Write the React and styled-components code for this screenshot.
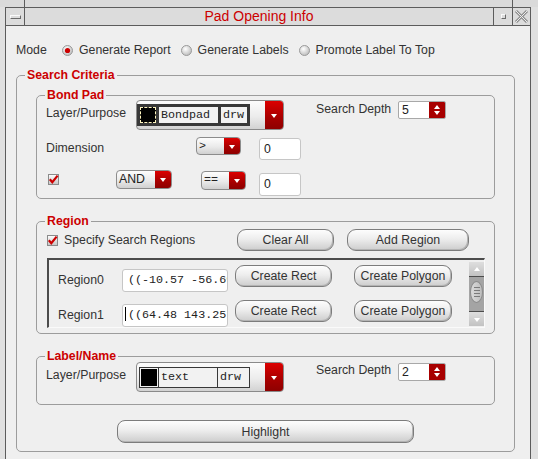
import React from "react";
import styled, { createGlobalStyle } from "styled-components";

const GlobalStyle = createGlobalStyle`
  body {
    margin: 0;
    background: #e0e0e0;
    font-family: "Liberation Sans", Arial, sans-serif;
  }
`;

const Screen = styled.div`
  width: 538px;
  height: 459px;
  overflow: hidden;
  background: #e0e0e0;
`;

const TopStrip = styled.div`
  display: flex;
  height: 7px;
  background: #dadada;
`;

const StripCell = styled.div`
  width: ${(p) => p.$w}px;
  box-sizing: border-box;
  border-left: ${(p) => (p.$lines ? "1px solid #5c5c5c" : "none")};
  border-right: ${(p) => (p.$lines ? "1px solid #5c5c5c" : "none")};
`;

const Window = styled.div`
  margin-left: 5px;
  width: 526px;
  height: 452px;
  box-sizing: border-box;
  border-left: 1px solid #5c5c5c;
  border-right: 1px solid #5c5c5c;
  background: #efefef;
  display: flex;
  flex-direction: column;
`;

const TitleBar = styled.div`
  display: flex;
  height: 19px;
  flex-shrink: 0;
  box-sizing: border-box;
  border-top: 1px solid #5c5c5c;
  border-bottom: 1px solid #5c5c5c;
  background: #dcdcdc;
`;

const TitleButton = styled.div`
  width: ${(p) => p.$w}px;
  box-sizing: border-box;
  border-left: ${(p) => (p.$left ? "1px solid #5c5c5c" : "none")};
  border-right: ${(p) => (p.$right ? "1px solid #5c5c5c" : "none")};
  display: flex;
  align-items: center;
  justify-content: center;
`;

const Bevel = styled.div`
  width: ${(p) => p.$w}px;
  height: ${(p) => p.$h}px;
  box-sizing: border-box;
  border: 1px solid;
  border-color: #fafafa #6a6a6a #6a6a6a #fafafa;
`;

const Title = styled.div`
  flex: 1;
  text-align: center;
  color: #cc0000;
  font-size: 14px;
  line-height: 17px;
`;

const Body = styled.div`
  flex: 1;
  padding: 14px 15px 0 10px;
`;

const ModeRow = styled.div`
  display: flex;
  align-items: center;
  height: 20px;
  font-size: 12.3px;
  color: #333;
`;

const ModeLabel = styled.span`
  width: 46px;
`;

const RadioOption = styled.label`
  display: flex;
  align-items: center;
  gap: 6px;
  margin-right: 10px;
  white-space: nowrap;
`;

const Group = styled.fieldset`
  margin: ${(p) => p.$mt || 0}px 0 0 0;
  padding: 0;
  min-width: 0;
  border: 1px solid #9c9c9c;
  border-radius: 5px;
`;

const Legend = styled.legend`
  margin-left: 8px;
  padding: 0 2px;
  color: #cc0000;
  font-weight: bold;
  font-size: 12.3px;
  line-height: 10px;
`;

const GroupBody = styled.div`
  padding: ${(p) => p.$pad};
`;

const Row = styled.div`
  display: flex;
  align-items: flex-start;
  height: ${(p) => p.$h}px;
  margin-top: ${(p) => p.$mt || 0}px;
`;

const FieldLabel = styled.span`
  flex-shrink: 0;
  font-size: 12.3px;
  line-height: 14px;
  color: #333;
  white-space: nowrap;
  width: ${(p) => (p.$w ? p.$w + "px" : "auto")};
  margin-left: ${(p) => p.$ml || 0}px;
  margin-top: ${(p) => p.$mt || 0}px;
`;

const LayerBox = styled.div`
  display: flex;
  align-items: flex-start;
  flex-shrink: 0;
  width: 148px;
  height: 30px;
  margin-top: ${(p) => p.$mt || 0}px;
  box-sizing: border-box;
  border: 1px solid #8a8a8a;
  border-radius: 4px;
  background: linear-gradient(#fcfcfc, #ececec 55%, #d2d2d2);
  overflow: hidden;
`;

const Cells = styled.div`
  display: flex;
  gap: ${(p) => (p.$thick ? 3 : 1)}px;
  margin-left: ${(p) => (p.$thick ? 0 : 2)}px;
  margin-top: ${(p) => (p.$thick ? 3 : 4)}px;
  height: ${(p) => (p.$thick ? 22 : 21)}px;
  box-sizing: border-box;
  border: ${(p) => (p.$thick ? 3 : 1)}px solid #383838;
  background: #383838;
`;

const Cell = styled.div`
  width: ${(p) => p.$w}px;
  background: #f2f2f2;
  font-family: "Liberation Mono", monospace;
  font-size: 11.7px;
  line-height: ${(p) => (p.$thick ? 16 : 19)}px;
  color: #222;
  padding-left: 2px;
  box-sizing: border-box;
`;

const SwatchCell = styled.div`
  width: ${(p) => p.$w}px;
  background: #000;
  box-sizing: border-box;
  border: 1px ${(p) => (p.$dashed ? "dashed #fff6c0" : "solid #f2f2f2")};
`;

const RedDrop = styled.div`
  margin-left: auto;
  align-self: stretch;
  width: ${(p) => p.$w || 17}px;
  background: linear-gradient(#dc0000, #a60000 60%, #8e0000);
  display: flex;
  align-items: center;
  justify-content: center;
`;

const DownTri = styled.div`
  width: 0;
  height: 0;
  border-left: 3.5px solid transparent;
  border-right: 3.5px solid transparent;
  border-top: 4px solid #fff;
  margin-top: 1px;
`;

const UpTri = styled.div`
  width: 0;
  height: 0;
  border-left: 3.5px solid transparent;
  border-right: 3.5px solid transparent;
  border-bottom: 4px solid #fff;
`;

const Drop = styled.div`
  display: flex;
  flex-shrink: 0;
  width: ${(p) => p.$w}px;
  height: ${(p) => p.$h}px;
  margin-left: ${(p) => p.$ml || 0}px;
  margin-top: ${(p) => p.$mt || 0}px;
  box-sizing: border-box;
  border: 1px solid #8c8c8c;
  border-radius: 4px;
  overflow: hidden;
  background: linear-gradient(#fdfdfd, #eaeaea 55%, #d0d0d0);
`;

const DropText = styled.span`
  flex: 1;
  padding-left: 2px;
  font-family: ${(p) => (p.$mono ? '"Liberation Mono", monospace' : '"Liberation Sans", Arial, sans-serif')};
  font-size: ${(p) => (p.$mono ? 11.7 : 12.3)}px;
  line-height: ${(p) => p.$lh}px;
  color: #222;
`;

const Spin = styled.div`
  display: flex;
  flex-shrink: 0;
  width: 48px;
  height: 18px;
  margin-top: ${(p) => p.$mt || 0}px;
  box-sizing: border-box;
  border: 1px solid #a8a8a8;
  border-radius: 2px;
  background: #fff;
  overflow: hidden;
`;

const SpinValue = styled.span`
  flex: 1;
  padding-left: 3px;
  font-size: 12.3px;
  line-height: 16px;
  color: #222;
`;

const SpinArrows = styled.div`
  width: 16px;
  background: #a80000;
  display: flex;
  flex-direction: column;
  align-items: center;
  justify-content: center;
  gap: 2px;

  & > div:last-child {
    transform: rotate(180deg);
  }
`;

const Field = styled.div`
  flex-shrink: 0;
  width: ${(p) => p.$w}px;
  height: ${(p) => p.$h}px;
  margin-left: ${(p) => p.$ml || 0}px;
  margin-top: ${(p) => p.$mt || 0}px;
  box-sizing: border-box;
  padding-left: ${(p) => p.$pl || 4}px;
  background: #fff;
  border: 1px solid #c6c6c6;
  border-radius: 3px;
  font-family: ${(p) => (p.$mono ? '"Liberation Mono", monospace' : '"Liberation Sans", Arial, sans-serif')};
  font-size: ${(p) => (p.$mono ? 11.7 : 12.3)}px;
  line-height: ${(p) => p.$h - 2}px;
  color: #222;
  white-space: nowrap;
  overflow: hidden;
`;

const Caret = styled.span`
  display: inline-block;
  width: 1px;
  height: 14px;
  background: #000;
  margin-right: 2px;
  vertical-align: -3px;
`;

const IconSlot = styled.span`
  display: flex;
  flex-shrink: 0;
  margin-left: ${(p) => p.$ml || 0}px;
  margin-top: ${(p) => p.$mt || 0}px;
`;

const CheckOption = styled.label`
  display: flex;
  align-items: center;
  gap: 6px;
  width: 191px;
  height: 22px;
  padding-left: 1px;
  box-sizing: border-box;
  font-size: 12.3px;
  color: #333;
  white-space: nowrap;
`;

const Pill = styled.button`
  display: block;
  flex-shrink: 0;
  width: ${(p) => p.$w}px;
  height: ${(p) => p.$h}px;
  margin-left: ${(p) => p.$ml || 0}px;
  margin-top: ${(p) => p.$mt || 0}px;
  padding: 0;
  box-sizing: border-box;
  border: 1px solid #7c7c7c;
  border-radius: 9px;
  background: linear-gradient(#fdfdfd, #ededed 45%, #cdcdcd);
  box-shadow: inset -1px -1px 0 #b4b4b4;
  font-family: "Liberation Sans", Arial, sans-serif;
  font-size: 12.3px;
  color: #333;
`;

const WidePill = styled(Pill)`
  margin: 15px auto 0;
  border-radius: 8px;
`;

const ScrollArea = styled.div`
  display: flex;
  margin: 7px 0 0 1px;
  width: 438px;
  height: 70px;
  box-sizing: border-box;
  border-top: 2px solid #4c4c4c;
  border-left: 2px solid #4c4c4c;
  border-right: 1px solid #fafafa;
  border-bottom: 1px solid #fafafa;
  overflow: hidden;
`;

const RegionRows = styled.div`
  flex: 1;
  padding-left: 9px;
`;

const RegionRow = styled.div`
  display: flex;
  align-items: flex-start;
  height: 35px;
  flex-shrink: 0;
`;

const ScrollBar = styled.div`
  width: 15px;
  height: 64px;
  margin-top: 2px;
  display: flex;
  flex-direction: column;
  background: #a4a4a4;
`;

const ScrollStep = styled.div`
  height: 14px;
  flex-shrink: 0;
  display: flex;
  align-items: center;
  justify-content: center;
  background: linear-gradient(#dedede, #c2c2c2);
  border-${(p) => (p.$down ? "top" : "bottom")}: 1px solid #4c4c4c;
  margin-top: ${(p) => (p.$down ? "auto" : "0")};
`;

const ScrollThumb = styled.div`
  margin: 4px auto 0;
  width: 13px;
  height: 22px;
  box-sizing: border-box;
  border: 1px solid #8c8c8c;
  border-radius: 50%;
  background: linear-gradient(90deg, #dadada, #bdbdbd);
  display: flex;
  flex-direction: column;
  align-items: center;
  justify-content: center;
  gap: 2px;
`;

const Grip = styled.div`
  width: 6px;
  height: 1px;
  background: #7a7a7a;
`;

const Radio = ({ on }) => (
  <svg width="11" height="11" viewBox="0 0 11 11">
    <defs>
      <radialGradient id="radioFill" cx="0.4" cy="0.35" r="0.7">
        <stop offset="0" stopColor="#ffffff" />
        <stop offset="1" stopColor="#b9b9b9" />
      </radialGradient>
    </defs>
    <circle cx="5.5" cy="5.5" r="5" fill="url(#radioFill)" stroke="#9a9a9a" />
    {on && <circle cx="5.5" cy="5.5" r="2.6" fill="#cc0000" />}
  </svg>
);

const CheckMark = () => (
  <svg width="11" height="11" viewBox="0 0 11 11">
    <defs>
      <linearGradient id="checkFill" x1="0" y1="0" x2="0" y2="1">
        <stop offset="0" stopColor="#ffffff" />
        <stop offset="1" stopColor="#c4c4c4" />
      </linearGradient>
    </defs>
    <rect x="0.5" y="0.5" width="10" height="10" fill="url(#checkFill)" stroke="#8a8a8a" />
    <path d="M1.8 5.2 L4.3 8.2 L9.6 1.6" fill="none" stroke="#cc0000" strokeWidth="2.2" />
  </svg>
);

const CloseGlyph = () => (
  <svg width="15" height="15" viewBox="0 0 15 15">
    <path d="M2 2 L13 13 M13 2 L2 13" stroke="#8e8e8e" strokeWidth="3" />
    <path d="M2 2 L13 13 M13 2 L2 13" stroke="#ececec" strokeWidth="1" />
  </svg>
);

const SmallDrop = ({ w, h, ml, mt, mono, children }) => (
  <Drop $w={w} $h={h} $ml={ml} $mt={mt}>
    <DropText $mono={mono} $lh={h - 2}>{children}</DropText>
    <RedDrop $w={16}>
      <DownTri />
    </RedDrop>
  </Drop>
);

const LayerCombo = ({ thick, layer, mt }) => (
  <LayerBox $mt={mt}>
    {thick ? (
      <Cells $thick>
        <SwatchCell $w={16} $dashed />
        <Cell $w={59} $thick>{layer}</Cell>
        <Cell $w={26} $thick>drw</Cell>
      </Cells>
    ) : (
      <Cells>
        <SwatchCell $w={18} />
        <Cell $w={58}>{layer}</Cell>
        <Cell $w={31}>drw</Cell>
      </Cells>
    )}
    <RedDrop $w={18}>
      <DownTri />
    </RedDrop>
  </LayerBox>
);

const DepthSpin = ({ value, mt }) => (
  <Spin $mt={mt}>
    <SpinValue>{value}</SpinValue>
    <SpinArrows>
      <UpTri />
      <UpTri />
    </SpinArrows>
  </Spin>
);

const regions = [
  { name: "Region0", coords: "((-10.57 -56.69) (9.43 -36.69))", caret: false },
  { name: "Region1", coords: "((64.48 143.25) (84.48 163.25))", caret: true },
];

export default function App() {
  return (
    <Screen>
      <GlobalStyle />
      <TopStrip>
        <StripCell $w={24} />
        <StripCell $w={489} $lines />
      </TopStrip>
      <Window>
        <TitleBar>
          <TitleButton $w={19} $right>
            <Bevel $w={11} $h={4} />
          </TitleButton>
          <Title>Pad Opening Info</Title>
          <TitleButton $w={19} $left>
            <Bevel $w={5} $h={5} />
          </TitleButton>
          <TitleButton $w={18} $left>
            <CloseGlyph />
          </TitleButton>
        </TitleBar>

        <Body>
          <ModeRow>
            <ModeLabel>Mode</ModeLabel>
            <RadioOption>
              <Radio on />
              Generate Report
            </RadioOption>
            <RadioOption>
              <Radio />
              Generate Labels
            </RadioOption>
            <RadioOption>
              <Radio />
              Promote Label To Top
            </RadioOption>
          </ModeRow>

          <Group $mt={10}>
            <Legend>Search Criteria</Legend>
            <GroupBody $pad="10px 19px 8px 19px">
              <Group>
                <Legend>Bond Pad</Legend>
                <GroupBody $pad="0 9px 2px 9px">
                  <Row $h={30}>
                    <FieldLabel $w={90} $mt={6}>Layer/Purpose</FieldLabel>
                    <LayerCombo thick layer="Bondpad" />
                    <FieldLabel $w={82} $ml={32} $mt={2}>Search Depth</FieldLabel>
                    <DepthSpin value="5" mt={1} />
                  </Row>
                  <Row $h={24} $mt={6}>
                    <FieldLabel $w={150} $mt={5}>Dimension</FieldLabel>
                    <SmallDrop w={45} h={18} mt={1} mono>&gt;</SmallDrop>
                    <Field $w={42} $h={22} $ml={18} $mt={2}>0</Field>
                  </Row>
                  <Row $h={26} $mt={10}>
                    <IconSlot $ml={2} $mt={4}>
                      <CheckMark />
                    </IconSlot>
                    <SmallDrop w={56} h={19} ml={57}>AND</SmallDrop>
                    <SmallDrop w={45} h={19} ml={29} mt={1} mono>==</SmallDrop>
                    <Field $w={42} $h={23} $ml={13} $mt={3}>0</Field>
                  </Row>
                </GroupBody>
              </Group>

              <Group $mt={17}>
                <Legend>Region</Legend>
                <GroupBody $pad="3px 9px 5px 9px">
                  <Row $h={22}>
                    <CheckOption>
                      <CheckMark />
                      Specify Search Regions
                    </CheckOption>
                    <Pill $w={97} $h={22}>Clear All</Pill>
                    <Pill $w={122} $h={22} $ml={13}>Add Region</Pill>
                  </Row>
                  <ScrollArea>
                    <RegionRows>
                      {regions.map((r) => (
                        <RegionRow key={r.name}>
                          <FieldLabel $w={64} $mt={13}>{r.name}</FieldLabel>
                          <Field $w={106} $h={23} $mt={9} $mono $pl={r.caret ? 2 : 5}>
                            {r.caret && <Caret />}
                            {r.coords}
                          </Field>
                          <Pill $w={97} $h={22} $ml={7} $mt={5}>Create Rect</Pill>
                          <Pill $w={98} $h={22} $ml={22} $mt={5}>Create Polygon</Pill>
                        </RegionRow>
                      ))}
                    </RegionRows>
                    <ScrollBar>
                      <ScrollStep>
                        <UpTri />
                      </ScrollStep>
                      <ScrollThumb>
                        <Grip />
                        <Grip />
                        <Grip />
                        <Grip />
                      </ScrollThumb>
                      <ScrollStep $down>
                        <DownTri />
                      </ScrollStep>
                    </ScrollBar>
                  </ScrollArea>
                </GroupBody>
              </Group>

              <Group $mt={17}>
                <Legend>Label/Name</Legend>
                <GroupBody $pad="0 9px 11px 9px">
                  <Row $h={32}>
                    <FieldLabel $w={90} $mt={7}>Layer/Purpose</FieldLabel>
                    <LayerCombo layer="text" mt={1} />
                    <FieldLabel $w={82} $ml={32} $mt={2}>Search Depth</FieldLabel>
                    <DepthSpin value="2" mt={2} />
                  </Row>
                </GroupBody>
              </Group>

              <WidePill $w={297} $h={23}>Highlight</WidePill>
            </GroupBody>
          </Group>
        </Body>
      </Window>
    </Screen>
  );
}
